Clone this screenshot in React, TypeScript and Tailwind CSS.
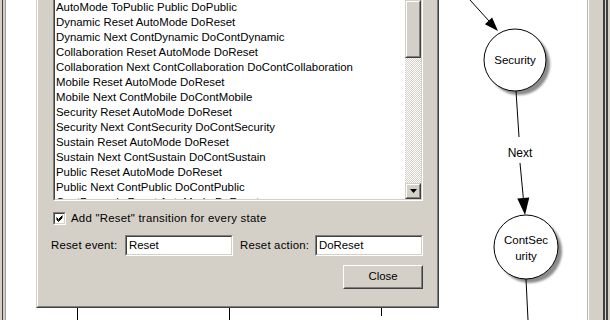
import React from "react";

const rows = [
  "AutoMode ToPublic Public DoPublic",
  "Dynamic Reset AutoMode DoReset",
  "Dynamic Next ContDynamic DoContDynamic",
  "Collaboration Reset AutoMode DoReset",
  "Collaboration Next ContCollaboration DoContCollaboration",
  "Mobile Reset AutoMode DoReset",
  "Mobile Next ContMobile DoContMobile",
  "Security Reset AutoMode DoReset",
  "Security Next ContSecurity DoContSecurity",
  "Sustain Reset AutoMode DoReset",
  "Sustain Next ContSustain DoContSustain",
  "Public Reset AutoMode DoReset",
  "Public Next ContPublic DoContPublic",
  "ContDynamic Reset AutoMode DoReset",
];

function Graph() {
  return (
    <svg
      className="absolute left-0 top-0"
      width={581}
      height={320}
      viewBox="6 0 581 320"
    >
      <defs>
        <filter id="blur" x="-20%" y="-20%" width="140%" height="140%">
          <feGaussianBlur stdDeviation="1.2" />
        </filter>
      </defs>
      <line x1={470} y1={0} x2={489} y2={21} stroke="#000" strokeWidth={1} />
      <polygon points="498,31 484.9,24.2 492.1,17.4" fill="#000" />
      <circle cx={519} cy={64} r={31} fill="#8c8c8c" filter="url(#blur)" />
      <circle cx={515} cy={60} r={31} fill="#fff" stroke="#000" strokeWidth={1} />
      <text
        x={515}
        y={64}
        textAnchor="middle"
        fontFamily="'Liberation Sans', Arial, sans-serif"
        fontSize={11.5}
        fill="#000"
      >
        Security
      </text>
      <line x1={516} y1={91} x2={519} y2={137} stroke="#000" strokeWidth={1} />
      <text
        x={520}
        y={157}
        textAnchor="middle"
        fontFamily="'Liberation Sans', Arial, sans-serif"
        fontSize={12}
        fill="#000"
      >
        Next
      </text>
      <line x1={520} y1={163} x2={523.5} y2={200} stroke="#000" strokeWidth={1} />
      <polygon points="525,215 517.3,198.6 529.3,197.4" fill="#000" />
      <circle cx={530} cy={251} r={32} fill="#8c8c8c" filter="url(#blur)" />
      <circle cx={526} cy={247} r={32} fill="#fff" stroke="#000" strokeWidth={1} />
      <text
        x={526}
        y={244}
        textAnchor="middle"
        fontFamily="'Liberation Sans', Arial, sans-serif"
        fontSize={11.5}
        fill="#000"
      >
        ContSec
      </text>
      <text
        x={526}
        y={260}
        textAnchor="middle"
        fontFamily="'Liberation Sans', Arial, sans-serif"
        fontSize={11.5}
        fill="#000"
      >
        urity
      </text>
      <line x1={526} y1={279} x2={528} y2={320} stroke="#000" strokeWidth={1} />
      <line x1={77.5} y1={308} x2={77.5} y2={320} stroke="#000" strokeWidth={1} />
      <line x1={229.5} y1={308} x2={229.5} y2={320} stroke="#000" strokeWidth={1} />
      <line x1={381.5} y1={308} x2={381.5} y2={316} stroke="#000" strokeWidth={1} />
    </svg>
  );
}

function Sunken({ className, children }: { className?: string; children?: React.ReactNode }) {
  return (
    <div
      className={
        "border border-t-[#808080] border-l-[#808080] border-b-white border-r-white " +
        (className ?? "")
      }
    >
      <div className="h-full w-full border border-t-[#404040] border-l-[#404040] border-b-[#d4d0c8] border-r-[#d4d0c8] bg-white">
        {children}
      </div>
    </div>
  );
}

function ListBox() {
  return (
    <Sunken className="ml-[15px] -mt-[2px] h-[203px] w-[370px]">
      <div className="flex h-full w-full overflow-hidden">
        <div className="flex-1 overflow-hidden pl-[1px]">
          {rows.map((r) => (
            <div key={r} className="h-[15px] whitespace-nowrap leading-[15px]">
              {r}
            </div>
          ))}
        </div>
        <div className="flex w-[16px] flex-col">
          <div className="h-[58px] border border-t-[#d4d0c8] border-l-[#d4d0c8] border-b-[#404040] border-r-[#404040]">
            <div className="h-full w-full border border-t-white border-l-white border-b-[#808080] border-r-[#808080] bg-[#d4d0c8]" />
          </div>
          <div className="flex-1 bg-[repeating-conic-gradient(#ffffff_0_25%,#d4d0c8_0_50%)] bg-[length:2px_2px]" />
          <div className="h-[16px] border border-t-[#d4d0c8] border-l-[#d4d0c8] border-b-[#404040] border-r-[#404040]">
            <div className="flex h-full w-full items-center justify-center border border-t-white border-l-white border-b-[#808080] border-r-[#808080] bg-[#d4d0c8]">
              <svg width="7" height="4" viewBox="0 0 7 4">
                <polygon points="0,0 7,0 3.5,4" fill="#000" />
              </svg>
            </div>
          </div>
        </div>
      </div>
    </Sunken>
  );
}

function Dialog() {
  return (
    <div className="absolute left-[30px] top-0 h-[308px] w-[403px] border-b border-l border-r border-b-[#404040] border-l-[#d4d0c8] border-r-[#404040] bg-[#d4d0c8]">
      <div className="flex h-full w-full flex-col border-b border-l border-r border-b-[#808080] border-l-white border-r-[#808080] text-[11.4px] text-black">
        <ListBox />
        <div className="mt-[11px] ml-[15px] flex h-[13px] items-center">
          <Sunken className="h-[13px] w-[13px]">
            <svg width="9" height="9" viewBox="0 0 9 9" className="block">
              <path d="M1.5 3.5 L3.5 5.5 L7.5 1.5 M1.5 4.5 L3.5 6.5 L7.5 2.5 M1.5 5.5 L3.5 7.5 L7.5 3.5" stroke="#000" strokeWidth={1} fill="none" />
            </svg>
          </Sunken>
          <span className="ml-[5px] whitespace-nowrap tracking-[0.25px]">Add "Reset" transition for every state</span>
        </div>
        <div className="mt-[10px] ml-[13px] flex h-[21px] items-center">
          <span className="w-[74px] whitespace-nowrap tracking-[0.2px]">Reset event:</span>
          <Sunken className="h-[21px] w-[108px]">
            <div className="pl-[2px] leading-[17px]">Reset</div>
          </Sunken>
          <span className="ml-[7px] w-[75px] whitespace-nowrap tracking-[0.2px]">Reset action:</span>
          <Sunken className="h-[21px] w-[108px]">
            <div className="pl-[2px] leading-[17px]">DoReset</div>
          </Sunken>
        </div>
        <div className="mt-[9px] mr-[14px] flex justify-end">
          <div className="h-[24px] w-[80px] border border-t-white border-l-white border-b-[#404040] border-r-[#404040]">
            <div className="flex h-full w-full items-center justify-center border border-t-[#d4d0c8] border-l-[#d4d0c8] border-b-[#808080] border-r-[#808080]">
              Close
            </div>
          </div>
        </div>
      </div>
    </div>
  );
}

export default function App() {
  return (
    <div className="flex h-[320px] w-[610px] overflow-hidden bg-[#d4d0c8] font-['Liberation_Sans',Arial,sans-serif]">
      <div className="flex w-[6px]">
        <div className="w-[2px] bg-[#d4d0c8]" />
        <div className="w-[1px] bg-[#404040]" />
        <div className="w-[2px] bg-[#d4d0c8]" />
        <div className="w-[1px] bg-[#a0a0a0]" />
      </div>
      <div className="relative w-[581px] bg-white">
        <Graph />
        <Dialog />
      </div>
      <div className="flex flex-1">
        <div className="w-[1px] bg-[#b8b8b8]" />
        <div className="w-[1px] bg-white" />
        <div className="w-[14px] bg-[#d4d0c8]" />
        <div className="w-[2px] bg-[#404040]" />
        <div className="w-[1px] bg-[#d4d0c8]" />
        <div className="w-[2px] bg-[#404040]" />
        <div className="flex-1 bg-[#d4d0c8]" />
      </div>
    </div>
  );
}
